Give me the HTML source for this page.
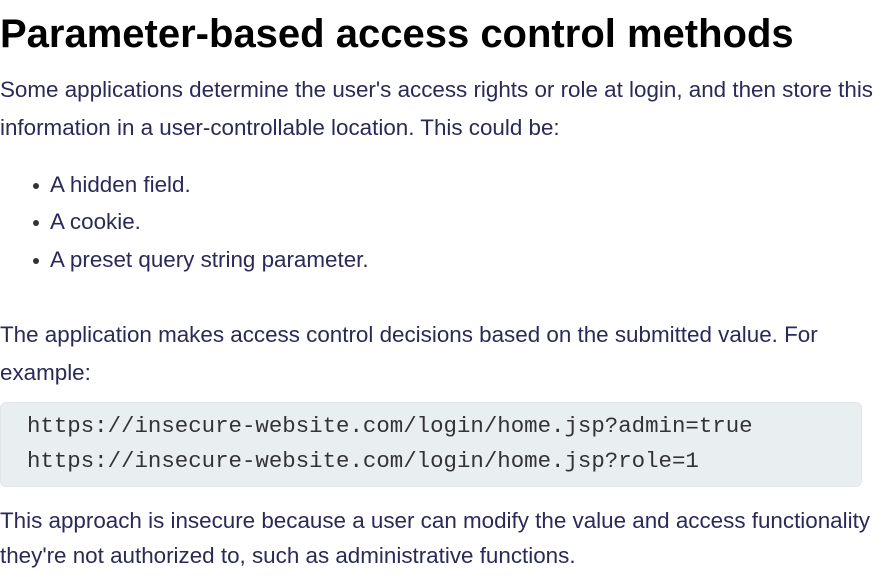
<!DOCTYPE html>
<html><head><style>
body{margin:0;width:883px;height:577px;background:#fff;font-family:"Liberation Sans",Arial,sans-serif;color:#2a2a58;position:relative;overflow:hidden}
.a{position:absolute;left:0;white-space:nowrap}
h1{position:absolute;left:0;top:10px;margin:0;font-size:40px;line-height:48px;font-weight:bold;color:#000;white-space:nowrap}
.t{font-size:22.4px;line-height:38px}
.b{position:absolute;left:33px;width:6px;height:6px;border-radius:50%;background:#333}
.code{position:absolute;left:0;top:402px;width:862px;height:85px;background:#e9eef1;border-radius:6px;border:1px solid #e1e6ea;box-sizing:border-box}
.m{position:absolute;left:27px;font-family:"Liberation Mono","Courier New",monospace;font-size:22.4px;color:#333;white-space:nowrap;line-height:30px}
</style></head><body>
<h1>Parameter-based access control methods</h1>
<div class="a t" style="top:71px">Some applications determine the user's access rights or role at login, and then store this</div>
<div class="a t" style="top:109px">information in a user-controllable location. This could be:</div>
<div class="b" style="top:183px"></div><div class="a t" style="left:50px;top:166px">A hidden field.</div>
<div class="b" style="top:220px"></div><div class="a t" style="left:50px;top:203px">A cookie.</div>
<div class="b" style="top:258px"></div><div class="a t" style="left:50px;top:241px">A preset query string parameter.</div>
<div class="a t" style="top:316px">The application makes access control decisions based on the submitted value. For</div>
<div class="a t" style="top:354px">example:</div>
<div class="code"></div>
<div class="m" style="top:411px">https://insecure-website.com/login/home.jsp?admin=true</div>
<div class="m" style="top:446px">https://insecure-website.com/login/home.jsp?role=1</div>
<div class="a t" style="top:502px">This approach is insecure because a user can modify the value and access functionality</div>
<div class="a t" style="top:537px">they're not authorized to, such as administrative functions.</div>
</body></html>
